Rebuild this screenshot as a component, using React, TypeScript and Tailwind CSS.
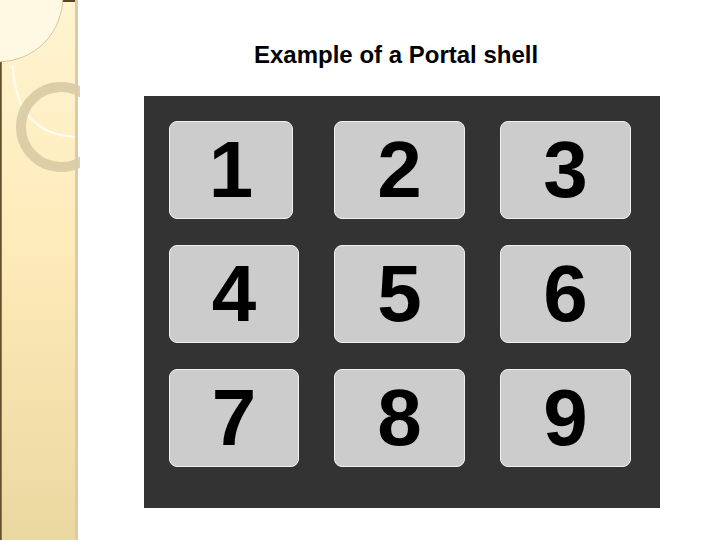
const DIGITS = ["1", "2", "3", "4", "5", "6", "7", "8", "9"];

function SideStrip() {
  return (
    <svg width="80" height="540" viewBox="0 0 80 540" className="block shrink-0">
      <defs>
        <linearGradient id="strip" x1="0" y1="0" x2="0" y2="1">
          <stop offset="0" stopColor="#fff4d2" />
          <stop offset="0.45" stopColor="#fdebb9" />
          <stop offset="1" stopColor="#ebd7a0" />
        </linearGradient>
        <linearGradient id="edge" x1="0" y1="0" x2="1" y2="0">
          <stop offset="0" stopColor="#4e3e1e" />
          <stop offset="1" stopColor="#a08a55" />
        </linearGradient>
      </defs>
      <rect x="0" y="0" width="78" height="540" fill="url(#strip)" />
      <rect x="0" y="0" width="2" height="540" fill="url(#edge)" />
      <rect x="62" y="0" width="14" height="2" fill="#5a4522" />
      <circle cx="-2" cy="-3" r="65" fill="#fff9e4" stroke="#c9b98c" strokeWidth="0.8" />
      <path d="M13 65 Q15 135 78 137" fill="none" stroke="#fffdf3" strokeWidth="2" />
      <circle cx="61" cy="127" r="40" fill="none" stroke="#d6c9a2" strokeOpacity="0.85" strokeWidth="10" />
      <rect x="75" y="0" width="3" height="540" fill="#d9cca6" />
    </svg>
  );
}

export default function App() {
  return (
    <div className="flex w-[720px] h-[540px] bg-white overflow-hidden">
      <SideStrip />
      <div className="flex flex-col">
        <h1 className="mt-[41px] ml-[174px] text-[24px] leading-[28px] font-bold text-black whitespace-nowrap font-['Liberation_Sans',Arial,sans-serif]">
          Example of a Portal shell
        </h1>
        <div className="mt-[27px] ml-[64px] w-[516px] h-[412px] bg-[#333333] pl-[25px] pt-[25px]">
          <div className="grid grid-cols-[130px_131px_131px] gap-x-[35px] gap-y-[26px]">
            {DIGITS.map((d, i) => (
              <div
                key={d}
                className={`${i === 0 ? "w-[124px]" : "w-full"} h-[98px] bg-[#cccccc] border border-[#f2f2f2] rounded-[8px] flex items-center justify-center`}
              >
                <span className="text-[80px] leading-none font-bold text-black font-['Liberation_Sans',Arial,sans-serif]">
                  {d}
                </span>
              </div>
            ))}
          </div>
        </div>
      </div>
    </div>
  );
}
